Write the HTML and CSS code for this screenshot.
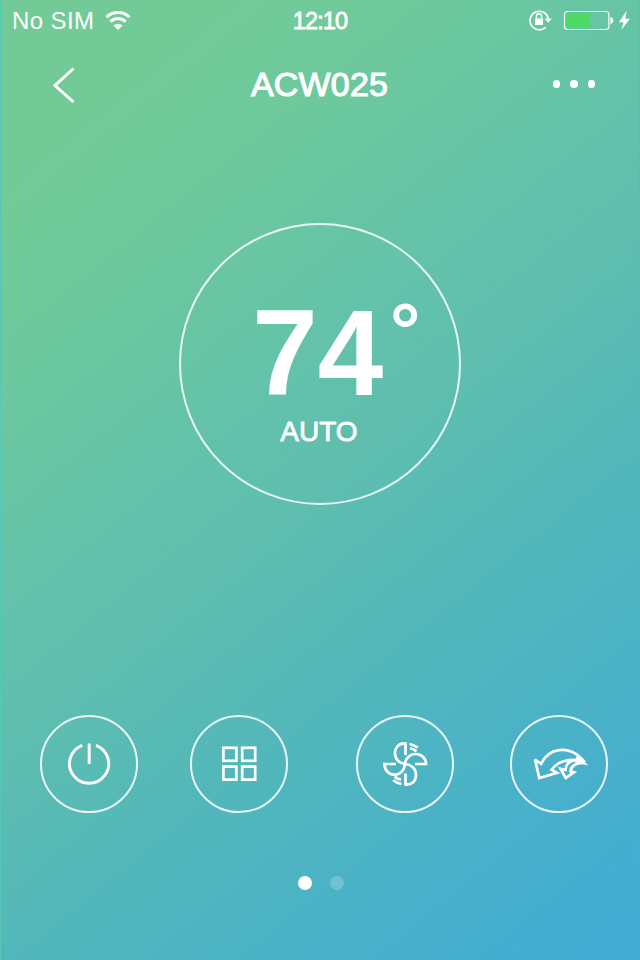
FILE: index.html
```
<!DOCTYPE html>
<html>
<head>
    <meta charset="utf-8" />
    <title>ACW025</title>
    <link rel="stylesheet" href="styles.css">
</head>
<body>
    <div id="screen">
        <div class="statusbar">
            <div class="carrier">
                <span>No SIM</span>
                <svg class="wifi" width="26" height="20" viewBox="0 0 26 20">
                    <path d="M1.6 6.2 A16 16 0 0 1 24.4 6.2" />
                    <path d="M5.4 10.6 A10.7 10.7 0 0 1 20.6 10.6" />
                    <path class="solid" d="M13 19 L8.4 14.6 A6.5 6.5 0 0 1 17.6 14.6 Z" />
                </svg>
            </div>
            <span class="time">12:10</span>
            <svg class="indicators" width="104" height="24" viewBox="0 0 104 24">
                <!-- rotation lock -->
                <path class="line" d="M17.8 19.2 A9.3 9.3 0 1 1 20.4 10.5" />
                <path class="solid" d="M16.5 10.6 H24 L20.2 14.8 Z" />
                <rect class="solid" x="7" y="10.5" width="8" height="6.5" rx="0.6" />
                <path class="line" d="M8.4 11 V8.4 A2.6 2.6 0 0 1 13.6 8.4 V11" />
                <!-- battery -->
                <rect class="line thin" x="36.5" y="3.5" width="44.4" height="18" rx="3" />
                <path class="charge" d="M39 5 H61.2 V20 H39 Q38 20 38 19 V6 Q38 5 39 5 Z" />
                <path class="solid" d="M82.4 9 Q85.2 9.6 85.2 12.5 Q85.2 15.4 82.4 16 Z" />
                <path class="solid" d="M98.8 2.5 L91 14.2 H95.6 L93.2 22 L102 10.7 H97.3 Z" />
            </svg>
        </div>

        <div class="navbar">
            <svg width="26" height="38" viewBox="0 0 26 38">
                <path d="M22.5 2.5 L4 19.5 L22.5 36" />
            </svg>
            <h1>ACW025</h1>
            <div class="more"><i></i><i></i><i></i></div>
        </div>

        <div class="dial">
            <div class="temp"><span class="value">74</span><span class="degree">&deg;</span></div>
            <div class="mode">AUTO</div>
        </div>

        <div class="controls">
            <div class="button power">
                <svg viewBox="0 0 98 98">
                    <path d="M42.2 30.3 A19.6 19.6 0 1 0 56 30.3" />
                    <path d="M49.2 28.5 V49" />
                </svg>
            </div>
            <div class="button grid">
                <svg viewBox="0 0 98 98">
                    <rect x="33.4" y="32.8" width="13" height="13" />
                    <rect x="52.2" y="32.8" width="13" height="13" />
                    <rect x="33.4" y="51.6" width="13" height="13" />
                    <rect x="52.2" y="51.6" width="13" height="13" />
                </svg>
            </div>
            <div class="button fan">
                <svg viewBox="0 0 98 98">
                    <path d="M49.5 40 V28.5 C42 28 38.8 33.5 39 38.5 C39.3 44.5 43.5 48.5 49 49 C54.5 49.5 60 53 60 60 C60 66 56 70 49.5 69.5 V58.5" />
                    <path d="M40 49 H28.5 C28.5 56 33.5 59.7 38.5 59.7 C44.5 59.7 48.5 55 49 49 C49.5 43 54 38.8 60 39 C66 39.2 70 43.5 70 49 H59" />
                    <path d="M53.5 29 Q58 29.8 61.8 32.8 M54 33.2 Q57.5 34 60.5 36.4" />
                    <path d="M45.5 69 Q41 68.2 37.2 65.2 M45 64.8 Q41.5 64 38.5 61.6" />
                </svg>
            </div>
            <div class="button swing">
                <svg viewBox="0 0 98 98">
                    <path d="M25 44.5 L29.3 63 L47 57.8 L41.6 54.8 C46 48.5 55 44 68 45" />
                    <path d="M25 44.5 L31 48.8 C39 32.5 58 31 70 42.2 L75 47.3" />
                    <path d="M68 45 C60 45 56 49 55.5 54.8 L50.5 53.8 L55.8 63 L64 57.2 L60.5 56.2 C61 51.5 65 48 73 47.8" />
                    <path class="solid" d="M67 40 L78.5 50.4 L65 47.5 Z" />
                </svg>
            </div>
        </div>

        <div class="pager">
            <i class="current"></i><i></i>
        </div>
    </div>
</body>
</html>
```
FILE: styles.css
```
body
{
    margin: 0;
    font-family: 'Liberation Sans', Arial, sans-serif;
    color: #fff;
}

#screen
{
    display: flex;
    flex-direction: column;
    align-items: center;
    width: 640px;
    height: 960px;
    background: linear-gradient(141deg, #72cb97 13%, #6dc99c 24%, #63c2aa 41%, #5dbdb0 52%, #52b7bb 66%, #49b1c9 82%, #42abd3 97%);
    box-shadow: inset 1px 0 #55c8b8, inset -1px 0 rgba(80, 180, 200, 0.4);
}

svg
{
    display: block;
    fill: none;
    stroke: #fff;
    stroke-width: 3;
}

svg .solid
{
    fill: #fff;
    stroke: none;
}

.statusbar
{
    box-sizing: border-box;
    display: grid;
    grid-template-columns: 1fr auto 1fr;
    align-items: center;
    width: 100%;
    height: 40px;
    padding: 0 8px 0 12px;
    font-size: 24px;
}

.carrier
{
    display: flex;
    align-items: center;
    gap: 11px;
    padding-top: 1px;
    letter-spacing: 0.4px;
}

.time
{
    margin-right: 4px;
    padding-top: 2px;
    font-size: 23.5px;
    letter-spacing: -0.9px;
    -webkit-text-stroke: 0.8px #fff;
}

.indicators
{
    justify-self: end;
}

.indicators .line
{
    stroke-width: 1.6;
}

.indicators .thin
{
    stroke-width: 1.2;
}

.indicators .charge
{
    fill: #4cd964;
    stroke: none;
}

.navbar
{
    box-sizing: border-box;
    display: grid;
    grid-template-columns: 1fr auto 1fr;
    align-items: center;
    width: 100%;
    height: 88px;
    padding: 1px 45px 0 51px;
}

h1
{
    margin: 0 7px 0 0;
    font-size: 34px;
    font-weight: normal;
    letter-spacing: 0.2px;
    line-height: 40px;
    padding-bottom: 1px;
    -webkit-text-stroke: 1.1px #fff;
}

.more
{
    display: flex;
    justify-self: end;
    gap: 10px;
    padding-bottom: 1px;
}

.more i
{
    width: 7.5px;
    height: 7.5px;
    border-radius: 50%;
    background: #fff;
}

.dial
{
    box-sizing: border-box;
    width: 282px;
    height: 282px;
    margin-top: 95px;
    padding-top: 77px;
    border: 2px solid rgba(255, 255, 255, 0.85);
    border-radius: 50%;
    text-align: center;
}

.temp
{
    position: relative;
    height: 114px;
    font-size: 122px;
    font-weight: bold;
    line-height: 103px;
}

.value
{
    display: inline-block;
    transform: translateX(-2px) scaleX(0.965);
}

.degree
{
    position: absolute;
    left: 209px;
    top: -9px;
    font-size: 76px;
    line-height: 76px;
}

.mode
{
    padding-right: 2px;
    font-size: 28px;
    line-height: 32px;
    -webkit-text-stroke: 0.8px #fff;
}

.controls
{
    display: flex;
    margin-top: 210px;
    width: 560px;
}

.button
{
    box-sizing: border-box;
    flex: none;
    width: 98px;
    height: 98px;
    margin-left: 52px;
    border: 2px solid rgba(255, 255, 255, 0.85);
    border-radius: 50%;
}

.button svg
{
    width: 98px;
    height: 98px;
    margin: -2px;
}

.power
{
    margin-left: 0;
}

.fan
{
    margin-left: 68px;
}

.swing
{
    margin-left: 56px;
}

.grid svg,
.fan svg,
.swing svg
{
    stroke-width: 2.7;
}

.pager
{
    display: flex;
    gap: 18px;
    margin: 63px 0 0 2px;
}

.pager i
{
    width: 14px;
    height: 14px;
    border-radius: 50%;
    background: rgba(255, 255, 255, 0.2);
}

.pager .current
{
    background: #fff;
}
```
